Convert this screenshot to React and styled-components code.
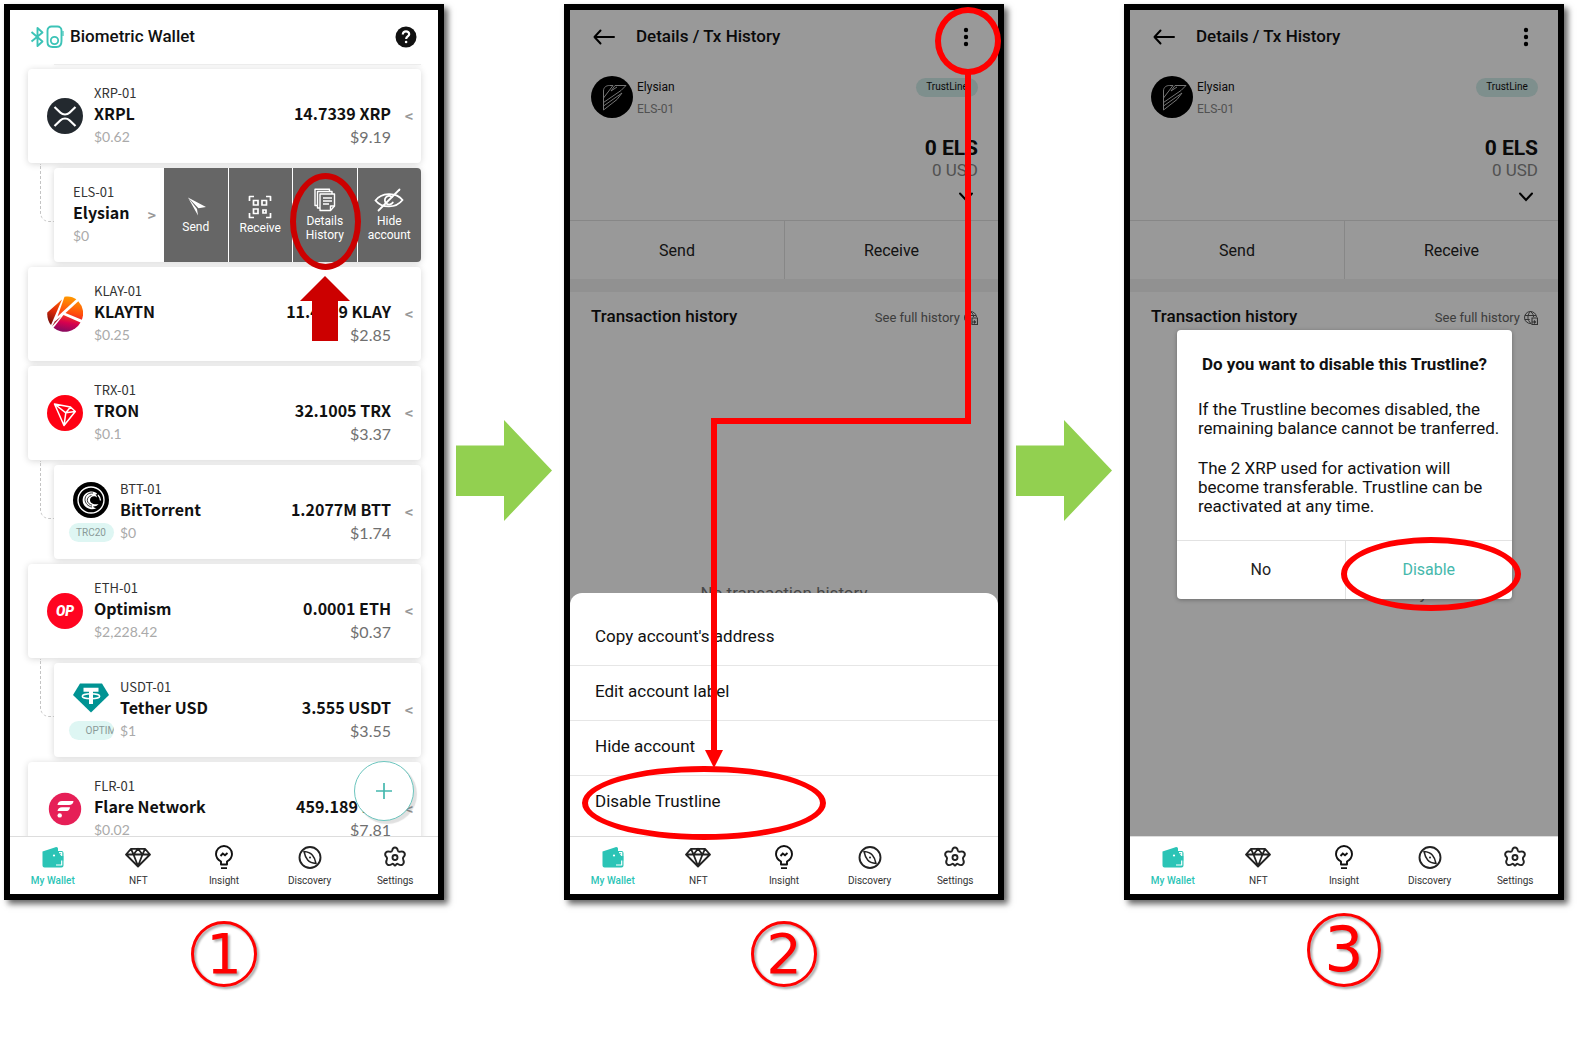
import React from "react";
import styled, { createGlobalStyle, css } from "styled-components";

const roboto = `Roboto, "Liberation Sans", sans-serif`;
const noto = `"Noto Sans CJK KR", "Noto Sans CJK SC", "Noto Sans", sans-serif`;
const lato = `Lato, "Noto Sans", sans-serif`;
const teal = "#2bc4b6";

const GlobalStyle = createGlobalStyle`
  * { box-sizing: border-box; }
  body { margin: 0; background: #fff; font-family: ${roboto}; color: #111; }
  button { font: inherit; color: inherit; background: none; border: 0; padding: 0; margin: 0; cursor: pointer; }
  h1, h2, p { margin: 0; }
  svg { display: block; flex: none; }
`;

/* ---------- page ---------- */

const Page = styled.main`
  min-height: 100vh;
  padding: 4px 14px 0 4px;
  display: grid;
  grid-template-columns: minmax(0, 1fr) 120px minmax(0, 1fr) 120px minmax(0, 1fr);
  align-items: start;
`;

const Step = styled.section`
  display: flex;
  flex-direction: column;
  align-items: center;
`;

const Phone = styled.div`
  position: relative;
  width: 100%;
  height: calc(100vh - 146px);
  min-height: 760px;
  border: 6px solid #000;
  background: #fff;
  box-shadow: 4px 4px 6px rgba(0, 0, 0, 0.6);
  display: flex;
  flex-direction: column;
`;

const StepNumber = styled.div`
  height: 87px;
  display: flex;
  align-items: flex-end;
`;

const Ring = styled.span`
  width: ${(p) => (p.$large ? 74 : 66)}px;
  height: ${(p) => (p.$large ? 74 : 66)}px;
  border: 3px solid #f00;
  border-radius: 50%;
  display: flex;
  align-items: center;
  justify-content: center;
  font-family: "DejaVu Sans", sans-serif;
  font-size: ${(p) => (p.$large ? 62 : 56)}px;
  line-height: 60px;
  color: #f00;
  filter: drop-shadow(2px 2px 1px rgba(0, 0, 0, 0.35));
`;

const Between = styled.div`
  height: calc(100vh - 146px);
  min-height: 760px;
  padding-top: 36px;
  display: flex;
  align-items: center;
  justify-content: center;
`;

/* ---------- shared phone parts ---------- */

const Header = styled.header`
  height: 54px;
  flex: none;
  display: flex;
  align-items: center;
  padding: 0 ${(p) => p.$right}px 0 20px;
`;

const Title = styled.h1`
  font-size: 17px;
  line-height: 24px;
  font-weight: 500;
  flex: 1;
  padding: 0 0 2px ${(p) => p.$gap || 0}px;
`;

const NavBar = styled.nav`
  height: 58px;
  flex: none;
  display: grid;
  grid-template-columns: repeat(5, 1fr);
  background: #fff;
  border-top: 1px solid #ddd;
`;

const NavButton = styled.button`
  display: flex;
  flex-direction: column;
  align-items: center;
  padding-top: 8px;
  gap: 4px;
  font-size: 10px;
  line-height: 16px;
  font-weight: ${(p) => (p.$active ? 500 : 400)};
  color: ${(p) => (p.$active ? teal : "#333")};
`;

/* ---------- wallet list ---------- */

const List = styled.div`
  position: relative;
  flex: 1;
  min-height: 0;
  overflow: hidden;
  padding: 0 17px 0 18px;
  display: flex;
  flex-direction: column;
  gap: 5px;
`;

const ScrolledCard = styled.div`
  flex: none;
  height: 1px;
  margin: 0 0 -1px 26px;
  background: #eee;
  box-shadow: 0 0 4px rgba(0, 0, 0, 0.15);
`;

const Card = styled.article`
  position: relative;
  flex: none;
  height: 94px;
  border-radius: 4px;
  background: #fff;
  box-shadow: 0 1px 7px rgba(0, 0, 0, 0.16);
  display: flex;
  align-items: center;
  padding: 0 6px 0 19px;
  ${(p) =>
    p.$sub &&
    css`
      margin-left: 26px;
      &::before {
        content: "";
        position: absolute;
        left: -14px;
        top: -4px;
        width: 13px;
        height: 57px;
        border: 1px dashed #c4c4c4;
        border-width: 0 0 1px 1px;
        border-bottom-left-radius: 9px;
      }
    `}
`;

const Logo = styled.div`
  width: 36px;
  flex: none;
  display: flex;
  flex-direction: column;
  align-items: center;
  gap: 5px;
  margin-right: 11px;
`;

const ChainTag = styled.span`
  width: 45px;
  height: 19px;
  margin: 0 -5px;
  padding-left: ${(p) => (p.$overflow ? 17 : 0)}px;
  border-radius: 10px;
  background: #def6f3;
  color: #8a9a98;
  font-size: 10px;
  line-height: 19px;
  text-align: ${(p) => (p.$overflow ? "left" : "center")};
  white-space: nowrap;
  overflow: hidden;
`;

const OpMark = styled.span`
  width: 36px;
  height: 36px;
  border-radius: 50%;
  background: #ff0420;
  color: #fff;
  font: italic 900 14px/36px ${roboto};
  text-align: center;
`;

const Names = styled.div`
  flex: 1;
  white-space: nowrap;
`;

const Code = styled.div`
  font: 400 13px/20px ${noto};
  color: #333;
`;

const Name = styled.h2`
  font: 700 16px/21px ${noto};
  color: #111;
`;

const Price = styled.div`
  font: 400 14px/25px ${lato};
  color: #aaa;
`;

const Holdings = styled.div`
  padding-top: 20px;
  text-align: right;
  white-space: nowrap;
`;

const Value = styled.div`
  font: 400 16px/25px ${lato};
  color: #707070;
`;

const SwipeHint = styled.button`
  width: 24px;
  padding-left: 12px;
  font: 700 14px/20px ${noto};
  color: #999;
`;

const Actions = styled.div`
  align-self: stretch;
  flex: none;
  width: 257px;
  display: grid;
  grid-template-columns: repeat(4, 1fr);
  gap: 1px;
  margin: 0 -6px 0 6px;
`;

const Action = styled.button`
  position: relative;
  background: #666;
  color: #fff;
  font-size: 12px;
  line-height: 14px;
  display: flex;
  flex-direction: column;
  align-items: center;
  justify-content: center;
  gap: 2px;
  &:last-child { border-radius: 0 4px 4px 0; }
`;

const AddButton = styled.button`
  position: absolute;
  right: 24px;
  bottom: 15px;
  width: 60px;
  height: 60px;
  border: 1px solid #6cc5be;
  border-radius: 50%;
  background: #fff;
  box-shadow: 3px 3px 1px rgba(0, 0, 0, 0.12);
  display: flex;
  align-items: center;
  justify-content: center;
`;

/* ---------- account details ---------- */

const Body = styled.div`
  position: relative;
  flex: 1;
  min-height: 0;
  overflow: hidden;
  display: flex;
  flex-direction: column;
`;

const BackButton = styled.button`
  width: 45px;
  padding-left: 3px;
`;

const Account = styled.div`
  height: 156px;
  flex: none;
  display: flex;
  padding: 12px 20px 0 21px;
  gap: 4px;
`;

const AccountNames = styled.div`
  flex: 1;
  font-size: 12px;
  line-height: 22px;
`;

const Muted = styled.div`
  color: #888;
`;

const Balance = styled.div`
  display: flex;
  flex-direction: column;
  align-items: flex-end;
`;

const TrustTag = styled.span`
  width: 62px;
  height: 19px;
  margin: 2px 0 39px;
  border-radius: 10px;
  background: #d3eeeb;
  font-size: 10px;
  line-height: 18px;
  text-align: center;
`;

const Total = styled.strong`
  font-size: 21px;
  line-height: 24px;
  font-weight: 700;
`;

const TotalUsd = styled.span`
  font-size: 17px;
  line-height: 20px;
  color: #888;
`;

const ExpandButton = styled.button`
  padding: 12px 4px 0;
`;

const SplitButtons = styled.div`
  flex: none;
  height: 59px;
  display: grid;
  grid-template-columns: 1fr 1fr;
  border-top: 1px solid #e2e2e2;
`;

const SplitButton = styled.button`
  font-size: 16px;
  color: ${(p) => (p.$accent ? "#45b8ac" : "#222")};
  & + & { border-left: 1px solid #e2e2e2; }
`;

const HistoryHead = styled.div`
  flex: none;
  border-top: 13px solid #f2f2f2;
  padding: 12px 20px 0 21px;
  display: flex;
  align-items: center;
  justify-content: space-between;
`;

const HistoryTitle = styled.h2`
  font-size: 17px;
  line-height: 24px;
  font-weight: 500;
`;

const FullHistory = styled.a`
  display: flex;
  align-items: center;
  gap: 4px;
  padding-top: 4px;
  font-size: 13px;
  line-height: 20px;
  color: #666;
  text-decoration: none;
`;

const EmptyNote = styled.p`
  flex: 1;
  display: flex;
  align-items: center;
  justify-content: center;
  padding-top: 22px;
  font-size: 17px;
  color: #777;
`;

const Shade = styled.div`
  position: absolute;
  inset: 0;
  background: rgba(0, 0, 0, 0.4);
  display: flex;
  flex-direction: column;
  justify-content: ${(p) => (p.$sheet ? "flex-end" : "center")};
  align-items: stretch;
  padding: ${(p) => (p.$sheet ? "0" : "82px 46px 0 47px")};
`;

const Sheet = styled.div`
  background: #fff;
  border-radius: 12px 12px 0 0;
  padding: 17px 0 6px;
`;

const SheetItem = styled.button`
  display: block;
  width: 100%;
  height: 55px;
  padding: 0 25px 4px;
  text-align: left;
  font-size: 17px;
  & + & { border-top: 1px solid #e6e6e6; }
`;

const Dialog = styled.div`
  position: relative;
  background: #fff;
  border-radius: 4px;
  box-shadow: 0 1px 4px rgba(0, 0, 0, 0.3);
`;

const DialogText = styled.div`
  padding: 22px 0 24px 21px;
  font-size: 17px;
  line-height: 19px;
  white-space: nowrap;
  p + p { margin-top: 21px; }
`;

const DialogTitle = styled.h2`
  margin: 0 21px 24px 0;
  font-size: 17px;
  line-height: 24px;
  font-weight: 700;
  text-align: center;
`;

/* ---------- red annotations lying over the screens ---------- */

const Mark = styled.span`
  position: absolute;
  z-index: 2;
  pointer-events: none;
  border: 6px solid ${(p) => p.$color || "#f00"};
  border-radius: 50%;
`;

const DetailsMark = styled(Mark)`
  top: 5px;
  left: -3px;
  width: 71px;
  height: 97px;
`;

const MenuMark = styled(Mark)`
  top: -3px;
  right: -3px;
  width: 66px;
  height: 68px;
`;

const TrustlineMark = styled(Mark)`
  left: 12px;
  bottom: 54px;
  width: 244px;
  height: 74px;
`;

const DisableMark = styled(Mark)`
  right: -9px;
  bottom: -12px;
  width: 180px;
  height: 74px;
`;

const UpArrow = styled.svg`
  position: absolute;
  z-index: 2;
  left: 7px;
  top: 108px;
`;

const PathDown = styled.span`
  position: absolute;
  z-index: 3;
  top: 63px;
  right: 27px;
  width: 260px;
  height: 351px;
  border: solid #f00;
  border-width: 0 6px 6px 0;
`;

const PathEnd = styled.span`
  position: absolute;
  z-index: 3;
  top: 408px;
  right: 281px;
  bottom: 138px;
  width: 6px;
  background: #f00;
  &::after {
    content: "";
    position: absolute;
    left: -6px;
    bottom: -12px;
    border: solid transparent;
    border-width: 18px 9px 0;
    border-top-color: #f00;
  }
`;

/* ---------- drawings ---------- */

const GreenArrow = () => (
  <svg width="96" height="101" viewBox="0 0 96 101" aria-hidden="true">
    <path d="M0 25.500H48V0L96 50.500 48 101V76H0Z" fill="#92d050" />
  </svg>
);

const DeviceIcon = () => (
  <svg width="34" height="24" viewBox="0 0 34 24" fill="none" stroke="#3cc3b7" aria-hidden="true">
    <path d="M1.500 7 12.500 16.500 7.500 21V3l5 4.500L1.500 16.500" strokeWidth="1.900" strokeLinejoin="round" />
    <path d="M21.500 1.500h6a4 4 0 0 1 4 4V16c0 4-2 6-5 6h-4c-3 0-5-1-5-5V5.500a4 4 0 0 1 4-4Z" strokeWidth="1.900" />
    <circle cx="24.500" cy="15.500" r="3.700" strokeWidth="1.800" />
    <path d="M33 6v5" strokeWidth="1.200" />
  </svg>
);

const HelpIcon = () => (
  <svg width="22" height="22" viewBox="0 0 22 22" fill="none" aria-hidden="true">
    <circle cx="11" cy="11" r="10.500" fill="#111" />
    <path d="M7.800 8.500C7.800 6.400 9.200 5.300 11 5.300s3.200 1.100 3.200 2.900c0 2.100-3 2.300-3 4.500v.3" stroke="#fff" strokeWidth="2.200" />
    <circle cx="11.100" cy="16" r="1.300" fill="#fff" />
  </svg>
);

const XrpLogo = () => (
  <svg width="36" height="36" viewBox="0 0 36 36" fill="none" aria-hidden="true">
    <circle cx="18" cy="18" r="18" fill="#23292f" />
    <path d="M7.500 9l6 5.700c2.500 2.400 6.500 2.400 9 0l6-5.700M7.500 28l6-5.700c2.500-2.400 6.500-2.400 9 0l6 5.700" stroke="#fff" strokeWidth="2.200" />
  </svg>
);

const KlaytnLogo = () => (
  <svg width="36" height="36" viewBox="0 0 36 36" aria-hidden="true">
    <defs>
      <linearGradient id="klay" gradientUnits="userSpaceOnUse" x1="24" y1="2" x2="18" y2="35">
        <stop offset="0" stopColor="#ff9500" />
        <stop offset="0.450" stopColor="#ff4a0c" />
        <stop offset="0.750" stopColor="#d6004f" />
        <stop offset="1" stopColor="#8d0a5f" />
      </linearGradient>
      <linearGradient id="klayLeft" gradientUnits="userSpaceOnUse" x1="15" y1="3" x2="2" y2="28">
        <stop offset="0" stopColor="#ff6a00" />
        <stop offset="0.500" stopColor="#e02a08" />
        <stop offset="1" stopColor="#6c0b0b" />
      </linearGradient>
    </defs>
    <path d="M15 3.500 4 29A18 18 0 0 1 .3 16.500Z" fill="url(#klayLeft)" />
    <path d="M17.500.8c4-1 8.500-.2 11.800 2.500L10.500 20.500Z" fill="url(#klay)" />
    <path d="M31.300 5.300a18 18 0 0 1 3.500 18.500L18.500 17Z" fill="url(#klay)" />
    <path d="M16.500 18.900 33.500 26.500A18 18 0 0 1 6.500 31.800Z" fill="url(#klay)" />
    <path d="M14 20.500 5 30.500 7.800 25.500Z" fill="#a00c1c" />
  </svg>
);

const TronLogo = () => (
  <svg width="36" height="36" viewBox="0 0 36 36" fill="none" stroke="#fff" strokeWidth="1.500" strokeLinejoin="round" aria-hidden="true">
    <circle cx="18" cy="18" r="18" fill="#ff0013" stroke="none" />
    <path d="M7.500 9 23.500 12l4.800 4.500L17 30.500ZM7.500 9l11.300 8.800L17 30.500M18.800 17.800l9.500-1.300M18.800 17.800l4.700-5.800" />
  </svg>
);

const BttLogo = () => (
  <svg width="36" height="36" viewBox="0 0 36 36" fill="none" stroke="#fff" aria-hidden="true">
    <circle cx="18" cy="18" r="18" fill="#000" stroke="none" />
    <circle cx="18" cy="18" r="13" strokeWidth="1.400" />
    <path d="M24.500 12.200C21.500 7.500 11 9 9.800 16.500c-1.500 8.500 7.700 13 13.700 9.500-1.500 0-2.500-.5-3.500-1.500 2.500 0 4.500-.8 5.500-2.500-5 1.300-8.500-1.200-8.500-4 0-3.500 4.500-5 7-2.500-.2-1.500-.8-2.500-1.500-3.300Z" fill="#fff" stroke="none" />
    <path d="M20 11c-4.500-.5-8 2.500-8 6.500 0 3.500 3 7 7 7.500M18.500 13.500c-3 .7-4.300 2.700-4.200 5 .2 2.300 2.200 4.200 4.700 4.700" stroke="#000" strokeWidth="0.800" />
    <path d="M25 13c1.500 1.500 2.200 3 2.500 5.500" strokeWidth="1.300" />
  </svg>
);

const TetherLogo = () => (
  <svg width="36" height="36" viewBox="0 0 36 36" fill="none" aria-hidden="true">
    <path d="M7 3.500h22L36 15 18 32.500 0 15Z" fill="#009393" />
    <path d="M10.500 9.800h15M18 9.800V24" stroke="#fff" strokeWidth="4" />
    <ellipse cx="18" cy="16.300" rx="8.700" ry="2.500" stroke="#fff" strokeWidth="1.500" />
  </svg>
);

const FlareLogo = () => (
  <svg width="36" height="36" viewBox="0 0 36 36" fill="#fff" aria-hidden="true">
    <circle cx="18" cy="18" r="16.200" fill="#e61f57" />
    <path d="M15 10h11.500c-.2 2.700-1.800 3.900-4.500 3.900H10.500C10.800 11.300 12.500 10 15 10ZM15 16.200h8c-.2 2.700-1.800 3.900-4.500 3.900h-8c.3-2.600 2-3.900 4.500-3.900Z" />
    <circle cx="12.700" cy="24.400" r="2.200" />
  </svg>
);

const ElysianLogo = () => (
  <svg width="42" height="42" viewBox="0 0 42 42" fill="none" stroke="#c4c4c4" strokeWidth="1" strokeLinejoin="round" aria-hidden="true">
    <circle cx="21" cy="21" r="21" fill="#000" stroke="none" />
    <path d="M12.500 22V15c0-4 3-5.500 6-5.500h3.500L12.500 22ZM12.500 22v12L26 23.500l5-6.500-18.500 13M24 9.500h11l-5 5-17.500 12M24 9.500l-4 5.500M20 15l6-4" />
  </svg>
);

const SendIcon = () => (
  <svg width="24" height="22" viewBox="0 0 24 22" fill="#fff" aria-hidden="true">
    <path d="M4 1.500 22 11 14.500 12.300ZM4 1.500 13 13l1 6.500Z" />
  </svg>
);

const QrIcon = () => (
  <svg width="24" height="24" viewBox="0 0 24 24" fill="none" stroke="#fff" strokeWidth="1.700" aria-hidden="true">
    <path d="M1.500 6V1.500H6M18 1.500h4.500V6M22.500 18v4.500H18M6 22.500H1.500V18" strokeLinejoin="round" />
    <path d="M5.500 5.500H10V10H5.500ZM14 5.500h4.500V10H14ZM5.500 14H10v4.500H5.500ZM15 15h3v3h-3Z" />
  </svg>
);

const DetailsIcon = () => (
  <svg width="24" height="24" viewBox="0 0 24 24" fill="none" stroke="#fff" strokeWidth="1.400" strokeLinejoin="round" aria-hidden="true">
    <path d="M7 6h14.500v12l-4 4.500H7Z" />
    <path d="M21.500 18h-4v4.500M7 20H4.500V3.500H19V6M4.500 17.500H2V1.200h14.500v2.300M10 10h9M10 13h9M10 16h6" />
  </svg>
);

const HideIcon = () => (
  <svg width="30" height="24" viewBox="0 0 30 24" fill="none" stroke="#fff" strokeWidth="1.800" strokeLinecap="round" aria-hidden="true">
    <path d="M1.500 12.500C7 4.500 22 3.500 28.500 12 22 20.500 8 20.500 1.500 12.500Z" />
    <path d="M18 9a4.300 4.300 0 1 0 .8 5.500" />
    <path d="M25.500 1.500 4.500 22.500" />
  </svg>
);

const PlusIcon = () => (
  <svg width="16" height="16" viewBox="0 0 16 16" stroke="#45b8ae" strokeWidth="1.700" aria-hidden="true">
    <path d="M8 0v16M0 8h16" />
  </svg>
);

const WalletIcon = () => (
  <svg width="24" height="24" viewBox="0 0 24 24" aria-hidden="true">
    <path d="M1.500 6.500 14.500 2.200c1.500-.4 2.500.3 2.500 1.800V6h3.500A2 2 0 0 1 22.500 8v12.500a2 2 0 0 1-2 2H3.500a2 2 0 0 1-2-2Z" fill={teal} />
    <path d="M18 7.700h2.700V20H15" fill="none" stroke="#fff" strokeWidth="1.200" />
    <path d="M19.300 11h3v4.500h-3Z" fill={teal} />
    <circle cx="13" cy="10.500" r="1.100" fill="#fff" />
    <circle cx="20" cy="9.500" r=".8" fill="#fff" />
  </svg>
);

const DiamondIcon = () => (
  <svg width="26" height="24" viewBox="0 0 26 24" fill="none" stroke="#222" strokeWidth="1.800" strokeLinejoin="round" aria-hidden="true">
    <path d="M6 3.800h14l5 5.700L13 21.500 1 9.500ZM1 9.500h24M8.500 9.500 13 21l4.500-11.500M6 3.800l2.500 5.700L13 3.800l4.500 5.700L20 3.800" />
  </svg>
);

const BulbIcon = () => (
  <svg width="24" height="24" viewBox="0 0 24 24" fill="none" stroke="#111" strokeWidth="1.900" aria-hidden="true">
    <path d="M9 19.500v-3C5.500 14.500 4 12 4 9a8 8 0 0 1 16 0c0 3-1.500 5.500-5 7.500v3Z" strokeLinejoin="round" />
    <path d="M8.500 11l2.300-2.500 2.200 1.700L15.500 8M9 23.200h6" />
  </svg>
);

const CompassIcon = () => (
  <svg width="24" height="24" viewBox="0 0 24 24" fill="none" stroke="#222" strokeWidth="1.900" aria-hidden="true">
    <circle cx="12" cy="12.500" r="10.500" />
    <path d="M6 6.500c4 .3 6.500 1.500 8.300 3.600 1.800 2 3 4.900 3.700 8.400-4-.5-6.500-1.500-8.300-3.600C7.900 12.800 6.700 10 6 6.500Z" strokeWidth="1.500" />
    <circle cx="12" cy="12.500" r="1" fill="#222" stroke="none" />
  </svg>
);

const GearIcon = () => (
  <svg width="24" height="24" viewBox="0 0 24 24" fill="none" stroke="#222" strokeWidth="1.900" strokeLinejoin="round" aria-hidden="true">
    <path d="M9.300 5.200C9.600 3.200 10.300 2.500 12 2.500s2.400.7 2.700 2.700c.4 1.400 1.300 1.900 2.800 1.500 2-.5 3.200-.2 4 1.300.8 1.600.4 2.700-1 4-.9 1-.8 1.700-.2 3 1 2 .8 3.200-.6 4.400-1.500 1.200-2.700 1-4.400-.2-1.200-.8-1.900-.5-2.400.6-.5 1-1.300 1-1.800 0-.5-1.100-1.200-1.400-2.400-.6-1.700 1.200-2.900 1.400-4.400.2-1.400-1.200-1.600-2.400-.6-4.400.6-1.300.7-2-.2-3-1.400-1.300-1.800-2.400-1-4 .8-1.500 2-1.800 4-1.300 1.500.4 2.400-.1 2.800-1.500Z" />
    <circle cx="12" cy="12.500" r="2.500" />
  </svg>
);

const BackIcon = () => (
  <svg width="22" height="16" viewBox="0 0 22 16" fill="none" stroke="#000" strokeWidth="2" strokeLinecap="round" strokeLinejoin="round" aria-hidden="true">
    <path d="M21 8H1.500M7.500 1.500 1.500 8l6 6.500" />
  </svg>
);

const DotsIcon = () => (
  <svg width="6" height="20" viewBox="0 0 6 20" fill="#000" aria-hidden="true">
    <circle cx="3" cy="3" r="2.200" />
    <circle cx="3" cy="10" r="2.200" />
    <circle cx="3" cy="17" r="2.200" />
  </svg>
);

const ChevronIcon = () => (
  <svg width="16" height="10" viewBox="0 0 16 10" fill="none" stroke="#000" strokeWidth="2" strokeLinecap="round" aria-hidden="true">
    <path d="M2 1.500 8 8l6-6.500" />
  </svg>
);

const GlobeIcon = () => (
  <svg width="14" height="14" viewBox="0 0 14 14" fill="none" stroke="#555" aria-hidden="true">
    <path d="M7 12.500A6 6 0 1 1 12.500 6M7 12.500C2.500 8.500 3.500 3 6.500.5 9 2.500 9.500 4 9.500 6M1 4.500h11M.7 8.500h5" />
    <path d="M8 8.500V7h3l2.500 0v6.500H8Zm0 2.500h3.500M10 9.500l1.500 1.500L10 12.500" strokeWidth="1.100" />
  </svg>
);

/* ---------- data ---------- */

const accounts = [
  { code: "KLAY-01", name: "KLAYTN", price: "$0.25", amount: "11.4019 KLAY", value: "$2.85", logo: <KlaytnLogo /> },
  { code: "TRX-01", name: "TRON", price: "$0.1", amount: "32.1005 TRX", value: "$3.37", logo: <TronLogo /> },
  { code: "BTT-01", name: "BitTorrent", price: "$0", amount: "1.2077M BTT", value: "$1.74", logo: <BttLogo />, tag: "TRC20", sub: true },
  { code: "ETH-01", name: "Optimism", price: "$2,228.42", amount: "0.0001 ETH", value: "$0.37", logo: <OpMark>OP</OpMark> },
  { code: "USDT-01", name: "Tether USD", price: "$1", amount: "3.555 USDT", value: "$3.55", logo: <TetherLogo />, tag: "OPTIMISM", sub: true },
  { code: "FLR-01", name: "Flare Network", price: "$0.02", amount: "459.189 FLR", value: "$7.81", logo: <FlareLogo /> },
];

const xrp = { code: "XRP-01", name: "XRPL", price: "$0.62", amount: "14.7339 XRP", value: "$9.19", logo: <XrpLogo /> };

const tabs = [
  ["My Wallet", <WalletIcon />],
  ["NFT", <DiamondIcon />],
  ["Insight", <BulbIcon />],
  ["Discovery", <CompassIcon />],
  ["Settings", <GearIcon />],
];

/* ---------- components ---------- */

function AccountCard({ account }) {
  const { code, name, price, amount, value, logo, tag, sub } = account;
  return (
    <Card $sub={sub}>
      <Logo>
        {logo}
        {tag && <ChainTag $overflow={tag.length > 5}>{tag}</ChainTag>}
      </Logo>
      <Names>
        <Code>{code}</Code>
        <Name>{name}</Name>
        <Price>{price}</Price>
      </Names>
      <Holdings>
        <Name as="div">{amount}</Name>
        <Value>{value}</Value>
      </Holdings>
      <SwipeHint aria-label={`Show actions for ${name}`}>&lt;</SwipeHint>
    </Card>
  );
}

function SwipedCard() {
  return (
    <Card $sub>
      <Names>
        <Code>ELS-01</Code>
        <Name>Elysian</Name>
        <Price>$0</Price>
      </Names>
      <SwipeHint aria-label="Hide actions for Elysian">&gt;</SwipeHint>
      <Actions>
        <Action><SendIcon />Send</Action>
        <Action><QrIcon />Receive</Action>
        <Action>
          <DetailsIcon />
          <span>Details<br />History</span>
          <DetailsMark $color="#c00" />
          <UpArrow width="50" height="65" viewBox="0 0 50 65" aria-hidden="true">
            <path d="M25 0 50 25H38V65H12V25H0Z" fill="#c00" />
          </UpArrow>
        </Action>
        <Action><HideIcon /><span>Hide<br />account</span></Action>
      </Actions>
    </Card>
  );
}

function Tabs() {
  return (
    <NavBar>
      {tabs.map(([label, icon], i) => (
        <NavButton key={label} $active={i === 0}>
          {icon}
          {label}
        </NavButton>
      ))}
    </NavBar>
  );
}

function AccountDetails() {
  return (
    <>
      <Header $right={29}>
        <BackButton aria-label="Back"><BackIcon /></BackButton>
        <Title $gap={1}>Details / Tx History</Title>
        <button aria-label="More options"><DotsIcon /></button>
      </Header>
      <Account>
        <ElysianLogo />
        <AccountNames>
          <div>Elysian</div>
          <Muted>ELS-01</Muted>
        </AccountNames>
        <Balance>
          <TrustTag>TrustLine</TrustTag>
          <Total>0 ELS</Total>
          <TotalUsd>0 USD</TotalUsd>
          <ExpandButton aria-label="Expand balance"><ChevronIcon /></ExpandButton>
        </Balance>
      </Account>
      <SplitButtons>
        <SplitButton>Send</SplitButton>
        <SplitButton>Receive</SplitButton>
      </SplitButtons>
      <HistoryHead>
        <HistoryTitle>Transaction history</HistoryTitle>
        <FullHistory href="#history">See full history<GlobeIcon /></FullHistory>
      </HistoryHead>
      <EmptyNote>No transaction history</EmptyNote>
    </>
  );
}

export default function App() {
  return (
    <Page>
      <GlobalStyle />
      <Step>
        <Phone>
          <Header $right={21}>
            <DeviceIcon />
            <Title $gap={6}>Biometric Wallet</Title>
            <button aria-label="Help"><HelpIcon /></button>
          </Header>
          <List>
            <ScrolledCard />
            <AccountCard account={xrp} />
            <SwipedCard />
            {accounts.map((a) => (
              <AccountCard key={a.code} account={a} />
            ))}
            <AddButton aria-label="Add account"><PlusIcon /></AddButton>
          </List>
          <Tabs />
        </Phone>
        <StepNumber><Ring>1</Ring></StepNumber>
      </Step>

      <Between><GreenArrow /></Between>

      <Step>
        <Phone>
          <Body>
            <AccountDetails />
            <Shade $sheet>
              <Sheet>
                <SheetItem>Copy account's address</SheetItem>
                <SheetItem>Edit account label</SheetItem>
                <SheetItem>Hide account</SheetItem>
                <SheetItem>Disable Trustline</SheetItem>
              </Sheet>
            </Shade>
          </Body>
          <Tabs />
          <MenuMark />
          <PathDown />
          <PathEnd />
          <TrustlineMark />
        </Phone>
        <StepNumber><Ring>2</Ring></StepNumber>
      </Step>

      <Between><GreenArrow /></Between>

      <Step>
        <Phone>
          <Body>
            <AccountDetails />
            <Shade>
              <Dialog role="dialog" aria-label="Disable Trustline">
                <DialogText>
                  <DialogTitle>Do you want to disable this Trustline?</DialogTitle>
                  <p>If the Trustline becomes disabled, the<br />remaining balance cannot be tranferred.</p>
                  <p>The 2 XRP used for activation will<br />become transferable. Trustline can be<br />reactivated at any time.</p>
                </DialogText>
                <SplitButtons>
                  <SplitButton>No</SplitButton>
                  <SplitButton $accent>Disable</SplitButton>
                </SplitButtons>
                <DisableMark />
              </Dialog>
            </Shade>
          </Body>
          <Tabs />
        </Phone>
        <StepNumber><Ring $large>3</Ring></StepNumber>
      </Step>
    </Page>
  );
}
